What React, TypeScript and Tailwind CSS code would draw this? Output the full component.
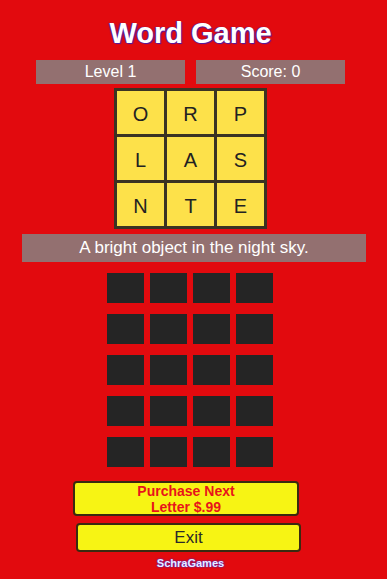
import React from "react";

const letters = ["O", "R", "P", "L", "A", "S", "N", "T", "E"];
const answerRows = [0, 1, 2, 3, 4];

export default function App() {
  return (
    <div
      className="w-[387px] h-[579px] bg-[#e20a0e] flex flex-col items-center pr-[6px] overflow-hidden"
      style={{ fontFamily: '"Liberation Sans", Arial, sans-serif' }}
    >
      {/* Title */}
      <h1 className="mt-[14px] h-[38px] text-[29px] leading-[38px] font-bold text-white [text-shadow:1px_1px_1px_#4a1aa8,-1px_0_1px_#4a1aa8]">
        Word Game
      </h1>

      {/* Level / score */}
      <div className="mt-[8px] flex gap-[11px]">
        <div className="w-[149px] h-[24px] bg-[#937070] text-white text-[16px] leading-[24px] text-center">
          Level 1
        </div>
        <div className="w-[149px] h-[24px] bg-[#937070] text-white text-[16px] leading-[24px] text-center">
          Score: 0
        </div>
      </div>

      {/* Letter grid */}
      <div className="mt-[4px] grid grid-cols-3 gap-[3px] p-[3px] bg-[#3b3323]">
        {letters.map((l, i) => (
          <div
            key={i}
            className="w-[47px] h-[43px] bg-[#fde14a] flex items-center justify-center pt-[3px] text-[20px] text-[#222]"
          >
            {l}
          </div>
        ))}
      </div>

      {/* Hint */}
      <div className="self-stretch ml-[22px] mr-[15px] mt-[5px] h-[28px] bg-[#937070] text-white text-[17px] leading-[28px] text-center">
        A bright object in the night sky.
      </div>

      {/* Answer slots */}
      <div className="mt-[11px] ml-[-2px] flex flex-col gap-[11px]">
        {answerRows.map((r) => (
          <div key={r} className="flex gap-[6px]">
            {[0, 1, 2, 3].map((c) => (
              <div key={c} className="w-[37px] h-[30px] bg-[#252525]" />
            ))}
          </div>
        ))}
      </div>

      {/* Buttons */}
      <button className="mt-[14px] mr-[9px] w-[226px] h-[35px] bg-[#f7f414] border-2 border-[#3a2a10] rounded-[4px] text-[#e8141a] font-bold text-[14px] leading-[16px]">
        Purchase Next
        <br />
        Letter $.99
      </button>
      <button className="mt-[7px] mr-[4px] w-[225px] h-[29px] bg-[#f7f414] border-2 border-[#3a2a10] rounded-[4px] text-[#2a2a2a] text-[17px] leading-[24px]">
        Exit
      </button>

      <div className="mt-[4px] text-[11px] font-bold text-[#eeeeff] leading-[14px] [text-shadow:0_0_2px_#3b2bd8,0_0_1px_#3b2bd8]">
        SchraGames
      </div>
    </div>
  );
}
